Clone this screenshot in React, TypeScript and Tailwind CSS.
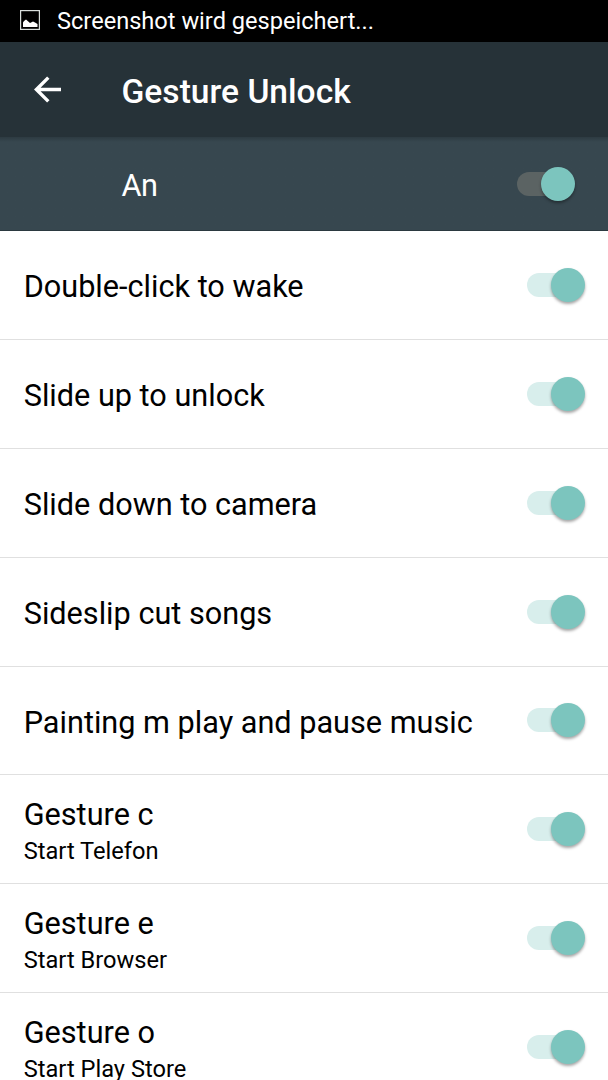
import React, { useState } from 'react';

interface GestureItem {
    title: string;
    summary?: string;
}

const gestures: GestureItem[] = [
    { title: 'Double-click to wake' },
    { title: 'Slide up to unlock' },
    { title: 'Slide down to camera' },
    { title: 'Sideslip cut songs' },
    { title: 'Painting m play and pause music' },
    { title: 'Gesture c', summary: 'Start Telefon' },
    { title: 'Gesture e', summary: 'Start Browser' },
    { title: 'Gesture o', summary: 'Start Play Store' },
];

interface ToggleProps {
    label: string;
    trackClass: string;
}

const Toggle: React.FC<ToggleProps> = ({ label, trackClass }) => {
    const [on, setOn] = useState(true);

    return (
        <button
            type="button"
            role="switch"
            aria-checked={on}
            aria-label={label}
            onClick={() => setOn(!on)}
            className="grid h-[34px] w-[58px] shrink-0 items-center"
        >
            <span className={`col-start-1 row-start-1 h-6 w-12 rounded-full ${on ? trackClass : 'bg-gray-300'}`} />
            <span
                className={`col-start-1 row-start-1 size-[34px] rounded-full shadow-[0_2px_3px_rgba(0,0,0,0.35)] ${
                    on ? 'justify-self-end bg-[#7cc5be]' : 'bg-gray-50'
                }`}
            />
        </button>
    );
};

const StatusBar: React.FC = () => {
    return (
        <div className="flex h-[42px] items-center bg-black pl-5 text-white">
            <svg viewBox="0 0 20 20" className="mt-[-2px] size-5" fill="none">
                <rect x="0.6" y="0.6" width="18.8" height="18.8" stroke="#d9dedc" strokeWidth="1.2" />
                <path d="M3 17V12.5L4 11L6 9.6L8 11.2L10 13L13 11.5L15 12.5L17.5 14V17Z" fill="currentColor" />
            </svg>
            <span className="ml-[17px] text-[23.6px] leading-[42px]">Screenshot wird gespeichert...</span>
        </div>
    );
};

const GestureRow: React.FC<GestureItem> = ({ title, summary }) => {
    return (
        <li className="flex h-[108.88px] items-center justify-between border-b border-[#e0e0e0] pr-[23px] pl-[23.7px]">
            <div className={`whitespace-nowrap text-black ${summary ? 'pt-2' : 'pt-[4.4px]'}`}>
                <div className="text-[30.65px] leading-9">{title}</div>
                {summary && <div className="text-[23.65px] leading-9">{summary}</div>}
            </div>
            <Toggle label={title} trackClass="bg-[#d8eeec]" />
        </li>
    );
};

export default function App() {
    return (
        <div className="h-[1080px] w-[608px] overflow-hidden bg-white font-['Roboto',sans-serif]">
            <StatusBar />
            <header className="flex h-[95px] items-center bg-[#263238] pl-[34px] text-white">
                <svg viewBox="0 0 28 28" className="size-7" fill="none" stroke="currentColor" strokeWidth="3.4">
                    <path d="M27 13.5H3M14.3 1.6 2.4 13.5 14.3 25.4" />
                </svg>
                <h1 className="ml-[59.5px] pt-1 text-[33.6px] leading-10 font-medium">Gesture Unlock</h1>
            </header>
            <div className="flex h-[94px] items-center justify-between border-b border-[#2b3940] bg-[#37474f] bg-linear-to-b from-[#2d3b42] to-[#37474f] to-[5px] pr-[33px] pl-[121.5px] text-white">
                <span className="pt-[5px] text-[30.65px] leading-9 tracking-[-0.5px]">An</span>
                <Toggle label="Gesture Unlock" trackClass="bg-[#5b6363]" />
            </div>
            <ul>
                {gestures.map((item) => (
                    <GestureRow key={item.title} {...item} />
                ))}
            </ul>
        </div>
    );
}
